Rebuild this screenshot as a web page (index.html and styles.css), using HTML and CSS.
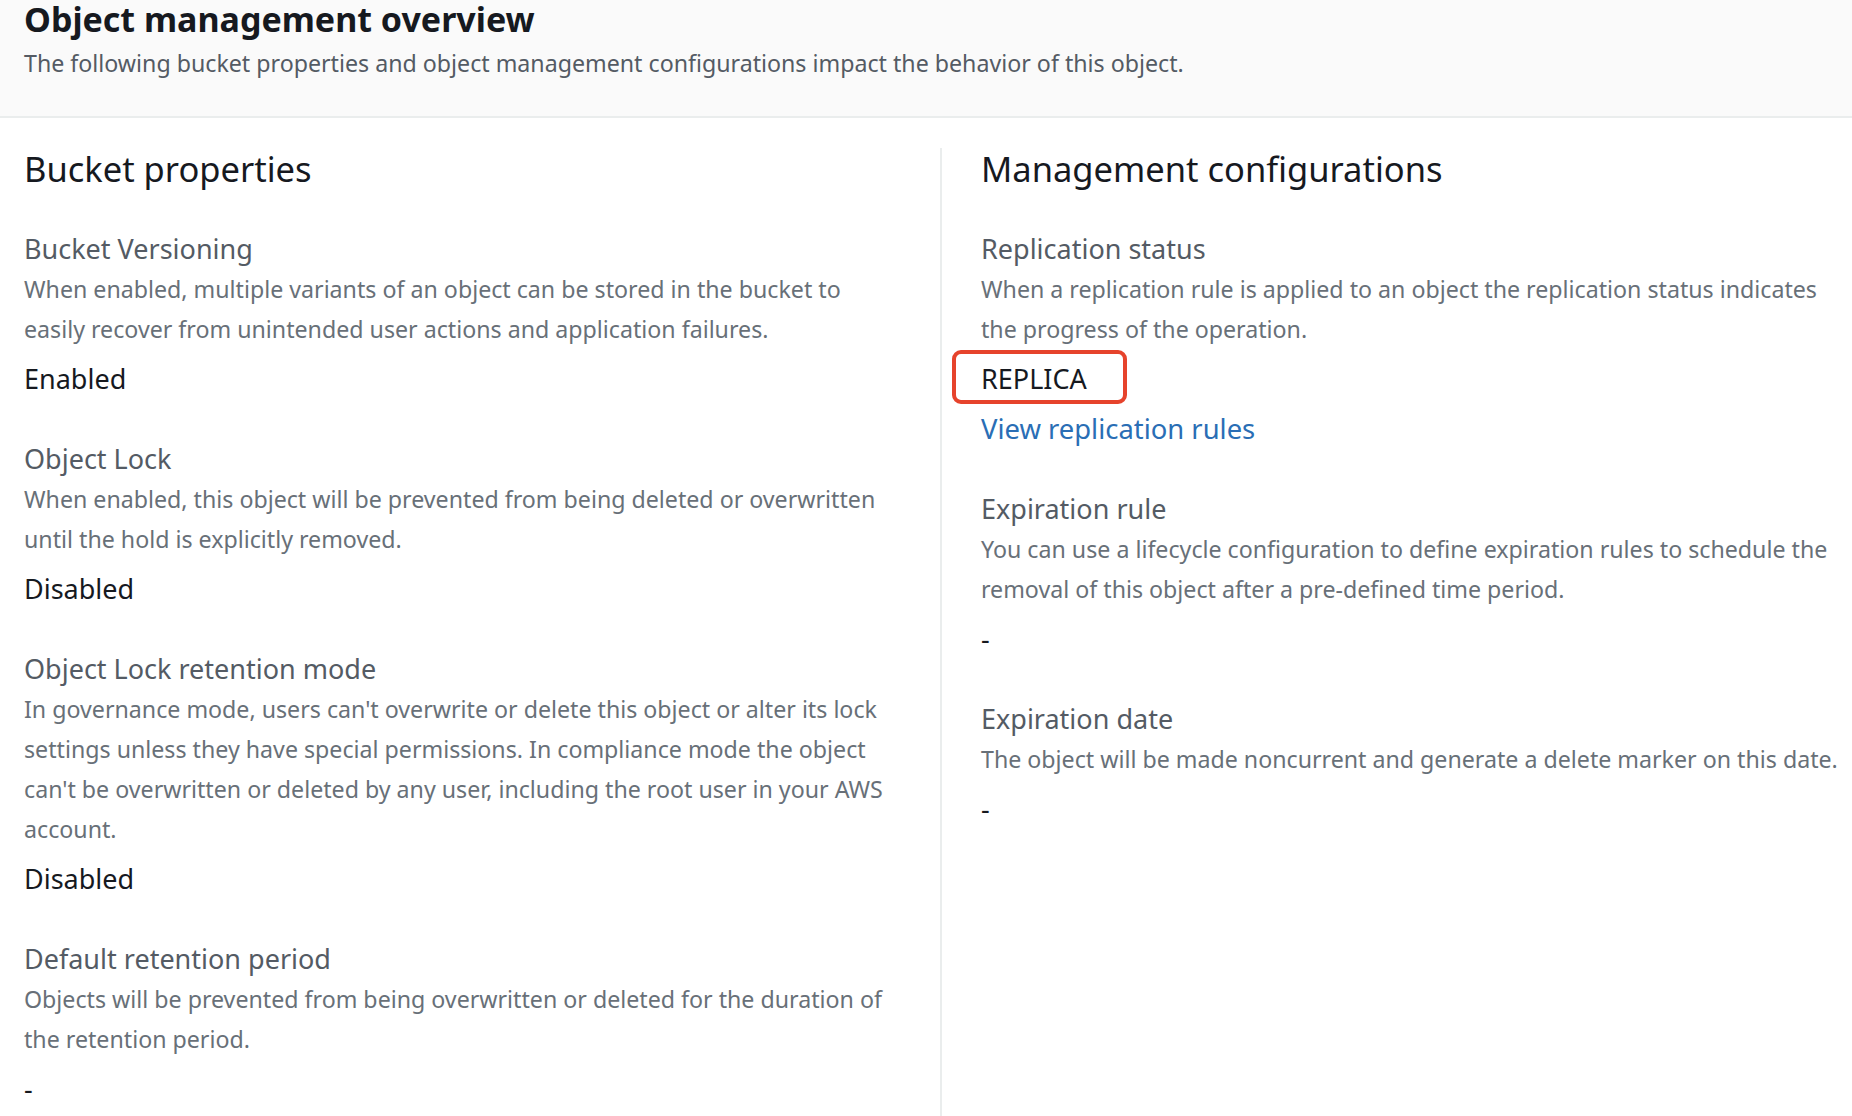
FILE: index.html
```html
<!DOCTYPE html>
<html lang="en">
<head>
<meta charset="utf-8">
<title>Object management overview</title>
<link rel="stylesheet" href="styles.css">
</head>
<body>
<header class="page-header">
  <h1 class="page-title">Object management overview</h1>
  <p class="page-desc">The following bucket properties and object management configurations impact the behavior of this object.</p>
</header>
<main class="columns">
  <section class="column column-left">
    <h2 class="section-title">Bucket properties</h2>
    <div class="kv">
      <div class="kv-label">Bucket Versioning</div>
      <div class="kv-desc">When enabled, multiple variants of an object can be stored in the bucket to easily recover from unintended user actions and application failures.</div>
      <div class="kv-value">Enabled</div>
    </div>
    <div class="kv">
      <div class="kv-label">Object Lock</div>
      <div class="kv-desc">When enabled, this object will be prevented from being deleted or overwritten until the hold is explicitly removed.</div>
      <div class="kv-value">Disabled</div>
    </div>
    <div class="kv">
      <div class="kv-label">Object Lock retention mode</div>
      <div class="kv-desc">In governance mode, users can't overwrite or delete this object or alter its lock settings unless they have special permissions. In compliance mode the object can't be overwritten or deleted by any user, including the root user in your AWS account.</div>
      <div class="kv-value">Disabled</div>
    </div>
    <div class="kv">
      <div class="kv-label">Default retention period</div>
      <div class="kv-desc">Objects will be prevented from being overwritten or deleted for the duration of the retention period.</div>
      <div class="kv-value">-</div>
    </div>
  </section>
  <section class="column column-right">
    <h2 class="section-title">Management configurations</h2>
    <div class="kv">
      <div class="kv-label">Replication status</div>
      <div class="kv-desc">When a replication rule is applied to an object the replication status indicates the progress of the operation.</div>
      <div class="kv-value"><span class="highlight">REPLICA</span></div>
      <a class="kv-link" href="#">View replication rules</a>
    </div>
    <div class="kv">
      <div class="kv-label">Expiration rule</div>
      <div class="kv-desc">You can use a lifecycle configuration to define expiration rules to schedule the removal of this object after a pre-defined time period.</div>
      <div class="kv-value">-</div>
    </div>
    <div class="kv">
      <div class="kv-label">Expiration date</div>
      <div class="kv-desc">The object will be made noncurrent and generate a delete marker on this date.</div>
      <div class="kv-value">-</div>
    </div>
  </section>
</main>
</body>
</html>
```

FILE: styles.css
```css
* { box-sizing: border-box; }

html, body {
  margin: 0;
  padding: 0;
  background: #ffffff;
  font-family: "Noto Sans", "Open Sans", Arial, sans-serif;
  color: #16191f;
}

body {
  height: 1116px;
  overflow: hidden;
  display: flex;
  flex-direction: column;
}

.page-header {
  background: #fafafa;
  border-bottom: 2px solid #eaeded;
  padding: 0 24px 33px 24px;
  height: 118px;
}

.page-title {
  margin: -1px 0 0 0;
  font-size: 34px;
  line-height: 40px;
  font-weight: 700;
  color: #16191f;
}

.page-desc {
  margin: 4px 0 0 0;
  font-size: 23.2px;
  line-height: 40px;
  color: #545b64;
}

.columns {
  flex: 1;
  display: grid;
  grid-template-columns: 940px 1fr;
  margin-top: 30px;
}

.column-left {
  padding: 2px 40px 0 24px;
}

.column-right {
  border-left: 2px solid #eaeded;
  padding: 2px 8px 0 39px;
}

.section-title {
  margin: -1px 0 40px 0;
  font-size: 34.5px;
  line-height: 40px;
  font-weight: 400;
  color: #16191f;
}

.kv {
  margin-bottom: 40px;
}

.kv-label {
  font-size: 27px;
  line-height: 40px;
  color: #545b64;
}

.kv-desc {
  font-size: 23.2px;
  line-height: 40px;
  color: #687078;
}

.kv-value {
  margin-top: 10px;
  font-size: 27px;
  line-height: 40px;
  color: #16191f;
}

.highlight {
  position: relative;
}

.highlight::after {
  content: "";
  position: absolute;
  left: -29px;
  right: -40px;
  top: -10px;
  bottom: -7px;
  border: 4px solid #e6432c;
  border-radius: 9px;
}

.kv-link {
  display: block;
  margin-top: 10px;
  font-size: 27.4px;
  line-height: 40px;
  color: #2a6eb5;
  text-decoration: none;
}
```
